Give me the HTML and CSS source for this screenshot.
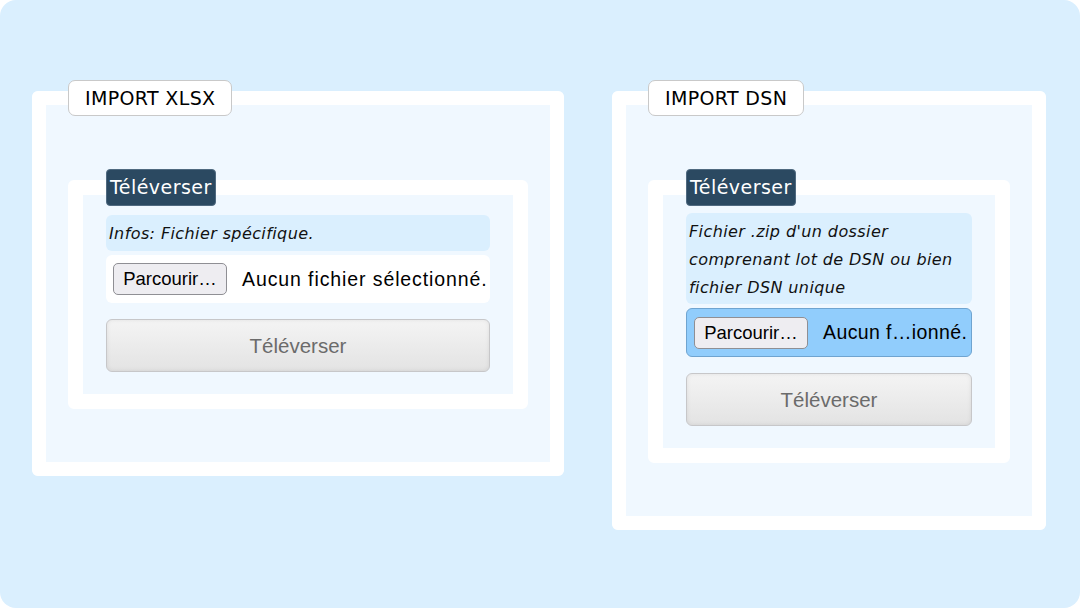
FILE: index.html
```html
<!DOCTYPE html>
<html lang="fr">
<head>
    <meta charset="UTF-8">
    <meta name="viewport" content="width=device-width, initial-scale=1.0">
    <title>Imports</title>
    <link rel="stylesheet" href="styles.css">
</head>
<body>
    <div class="page">
        <fieldset class="bloc bloc-xlsx">
            <legend class="titre">IMPORT XLSX</legend>
            <fieldset class="upload">
                <legend class="sous-titre">Téléverser</legend>
                <div class="infos">Infos: Fichier spécifique.</div>
                <div class="fichier">
                    <button class="parcourir" type="button">Parcourir…</button>
                    <span class="etat">Aucun fichier sélectionné.</span>
                </div>
                <button class="envoyer" type="button">Téléverser</button>
            </fieldset>
        </fieldset>

        <fieldset class="bloc bloc-dsn">
            <legend class="titre">IMPORT DSN</legend>
            <fieldset class="upload">
                <legend class="sous-titre">Téléverser</legend>
                <div class="infos">Fichier .zip d'un dossier comprenant lot de DSN ou bien fichier DSN unique</div>
                <div class="fichier fichier-actif">
                    <button class="parcourir" type="button">Parcourir…</button>
                    <span class="etat">Aucun f…ionné.</span>
                </div>
                <button class="envoyer" type="button">Téléverser</button>
            </fieldset>
        </fieldset>
    </div>
</body>
</html>
```

FILE: styles.css
```css
*{
    margin: 0px;
    padding: 0px;
    box-sizing: border-box;
}
body{
    background-color: white;
    font-family: "DejaVu Sans", Verdana, sans-serif;
    color: black;
}
.page{
    display: flex;
    align-items: flex-start;
    gap: 48px;
    width: 1080px;
    height: 608px;
    padding: 80px 34px 0px 32px;
    border-radius: 16px;
    background-color: #daeffe;
}
.bloc{
    border: 14px solid white;
    border-radius: 6px;
    background-color: #f0f8ff;
    padding: 53px 22px;
    min-width: 0;
}
.bloc-xlsx{
    width: 532px;
}
.bloc-dsn{
    width: 434px;
}
.titre{
    background-color: white;
    border: 1px solid #c9c9c9;
    border-radius: 7px;
    padding: 6px 16px;
    font-size: 19px;
    line-height: 22px;
    letter-spacing: 0.35px;
}
.upload{
    border: 15px solid white;
    border-radius: 6px;
    background-color: #f0f8ff;
    padding: 9px 23px 22px;
    min-width: 0;
}
.bloc-dsn .upload{
    padding-top: 7px;
}
.sous-titre{
    background-color: #2b4961;
    color: white;
    border: 1px solid #506a80;
    border-radius: 4px;
    padding: 0px 3px;
    font-size: 19px;
    line-height: 35px;
    letter-spacing: 0.45px;
}
.infos{
    background-color: #daeffe;
    border-radius: 6px;
    padding: 5px 3px 3px;
    font-style: italic;
    font-size: 16px;
    line-height: 28px;
    letter-spacing: 0.4px;
    color: #111;
}
.bloc-dsn .infos{
    padding: 5px 3px 2px;
}
.fichier{
    display: flex;
    align-items: center;
    gap: 15px;
    height: 48px;
    margin-top: 4px;
    padding: 0px 7px;
    background-color: white;
    border-radius: 6px;
    font-family: "Liberation Sans", Arial, sans-serif;
    white-space: nowrap;
}
.fichier-actif{
    height: 49px;
    background-color: #91cdfc;
    border: 1px solid #6fa4d0;
}
.parcourir{
    flex: 0 0 114px;
    height: 32px;
    background-color: #eeedf1;
    border: 1px solid #8f8f94;
    border-radius: 5px;
    font-family: "Liberation Sans", Arial, sans-serif;
    font-size: 18.5px;
    color: black;
}
.etat{
    font-size: 19.5px;
    letter-spacing: 0.9px;
}
.fichier-actif .etat{
    letter-spacing: 0.4px;
}
.envoyer{
    display: block;
    width: 100%;
    height: 53px;
    margin-top: 16px;
    border: 1px solid #c7c7c9;
    border-radius: 6px;
    background: linear-gradient(#f4f4f4, #e3e3e3);
    box-shadow: inset 0px 0px 4px rgba(0, 0, 0, 0.08);
    font-family: "Liberation Sans", Arial, sans-serif;
    font-size: 20.5px;
    color: #6b6b6b;
}
```
